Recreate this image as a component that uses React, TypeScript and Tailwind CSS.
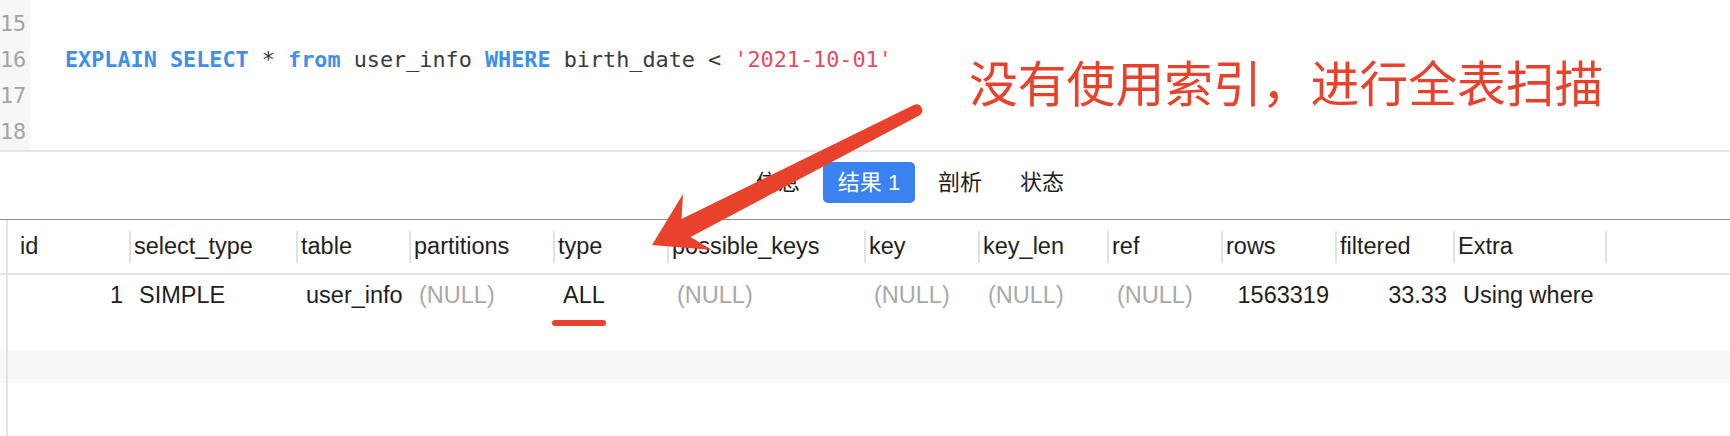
import React from "react";

const mono = { fontFamily: '"DejaVu Sans Mono", "Liberation Mono", monospace' };

type Col = { name: string; w: number; value: string; align?: "right"; muted?: boolean };

const columns: Col[] = [
  { name: "id", w: 123, value: "1", align: "right" },
  { name: "select_type", w: 167, value: "SIMPLE" },
  { name: "table", w: 113, value: "user_info" },
  { name: "partitions", w: 144, value: "(NULL)", muted: true },
  { name: "type", w: 114, value: "ALL" },
  { name: "possible_keys", w: 197, value: "(NULL)", muted: true },
  { name: "key", w: 114, value: "(NULL)", muted: true },
  { name: "key_len", w: 129, value: "(NULL)", muted: true },
  { name: "ref", w: 114, value: "(NULL)", muted: true },
  { name: "rows", w: 114, value: "1563319", align: "right" },
  { name: "filtered", w: 118, value: "33.33", align: "right" },
  { name: "Extra", w: 152, value: "Using where" },
];

const Gutter = ({ h, gray }: { h: string; gray?: boolean }) => (
  <div className={`flex ${h} ${gray ? "bg-[#f7f7f7]" : ""}`}>
    <div className="w-[6px] shrink-0" />
    <div className="w-[2px] shrink-0 bg-[#e4e4e4]" />
  </div>
);

export default function App() {
  return (
    <div
      className="relative h-[436px] w-[1730px] overflow-hidden bg-white"
      style={{ fontFamily: '"Liberation Sans", "Noto Sans CJK SC", sans-serif' }}
    >
      {/* editor */}
      <div className="flex h-[152px] border-b-2 border-[#e6e6e6]">
        <div className="w-[30px] shrink-0 overflow-hidden bg-[#f7f7f7] pt-[6px]">
          {["15", "16", "17", "18"].map((n) => (
            <div
              key={n}
              className="h-[36px] pr-[7px] text-right text-[21.8px] leading-[36px] text-[#a3a3a3]"
              style={mono}
            >
              {n}
            </div>
          ))}
        </div>
        <div className="pl-[35px] pt-[42px] text-[21.8px] leading-[36px] whitespace-pre text-[#3a3a3a]" style={mono}>
          <span className="font-bold text-[#3f8fe8]">EXPLAIN SELECT</span> *{" "}
          <span className="font-bold text-[#3f8fe8]">from</span> user_info{" "}
          <span className="font-bold text-[#3f8fe8]">WHERE</span> birth_date &lt;{" "}
          <span className="text-[#e8495d]">'2021-10-01'</span>
        </div>
      </div>

      {/* tabs */}
      <div className="flex h-[67px] items-start pl-[740px] pt-[10px] text-[22px] text-[#1c1c1c]">
        <div className="flex h-[41px] items-center px-4">信息</div>
        <div className="ml-[7px] flex h-[41px] w-[92px] items-center justify-center rounded-[5px] bg-[#3a82ef] text-white">
          结果 1
        </div>
        <div className="ml-[7px] flex h-[41px] items-center px-4">剖析</div>
        <div className="ml-[6px] flex h-[41px] items-center px-4">状态</div>
      </div>

      {/* grid */}
      <div className="border-t border-[#8f8f8f] text-[23.5px]">
        <div className="flex h-[55px] border-b-2 border-[#e6e6e6]">
          <Gutter h="h-[53px]" />
          {columns.map((c, i) => (
            <div key={c.name} className="flex shrink-0 items-center">
              <div
                className={`${i === 0 ? "pl-[12px]" : "pl-[3px]"} text-[#1e1e1e]`}
                style={{ width: c.w - 2 }}
              >
                {c.name}
              </div>
              <div className="h-[32px] w-[2px] bg-[#e2e2e2]" />
            </div>
          ))}
        </div>
        <div className="flex h-[42px]">
          <Gutter h="h-[42px]" />
          {columns.map((c) => (
            <div
              key={c.name}
              className={`flex shrink-0 items-center px-[8px] ${c.align === "right" ? "justify-end" : ""} ${
                c.muted ? "text-[#a8a8a8]" : "text-[#1e1e1e]"
              }`}
              style={{ width: c.w }}
            >
              {c.value}
            </div>
          ))}
        </div>
        <Gutter h="h-[33px]" />
        <Gutter h="h-[33px]" gray />
        <Gutter h="h-[60px]" />
      </div>

      {/* annotation */}
      <div
        className="absolute left-[969px] top-[57px] text-[48.8px] leading-none text-[#e8412c]"
        style={{ fontFamily: '"Noto Sans CJK SC", sans-serif' }}
      >
        没有使用索引，进行全表扫描
      </div>
      <svg className="pointer-events-none absolute left-0 top-0" width="1730" height="436">
        <path
          d="M652 245 L712 250 L690.5 236.9 L919.7 115.3 A6 6 0 0 0 914.3 104.7 L681.5 219.1 L683 194 Z"
          fill="#e8412c"
        />
        <line x1="555" y1="323" x2="603" y2="323" stroke="#e8412c" strokeWidth="6" strokeLinecap="round" />
      </svg>
    </div>
  );
}
